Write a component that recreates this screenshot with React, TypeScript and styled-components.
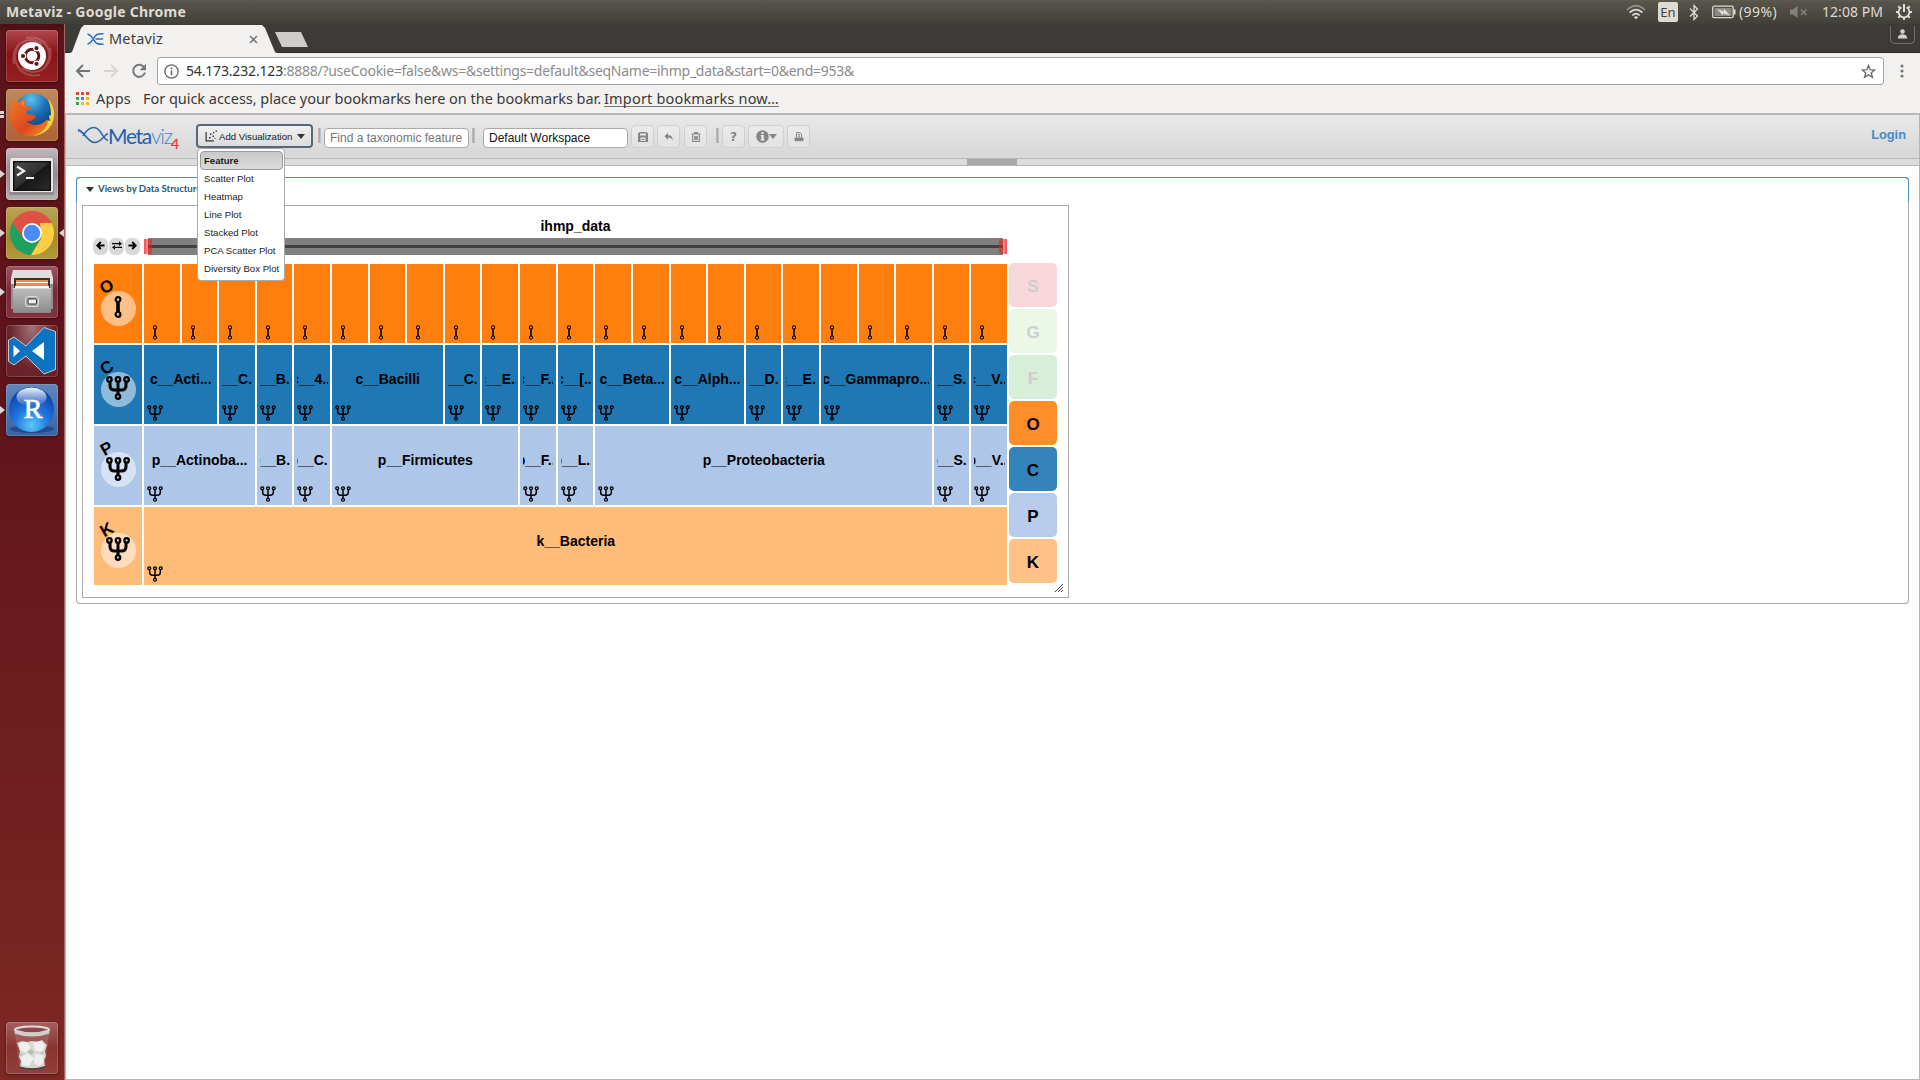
import React, { useLayoutEffect, useRef, useState } from "react";
import styled, { createGlobalStyle, css } from "styled-components";

const GlobalStyle = createGlobalStyle`
  * { box-sizing: border-box; }
  html, body { margin: 0; padding: 0; background: #fff; }
  body { width: 1920px; height: 1080px; overflow: hidden; font-family: "Liberation Sans", Arial, sans-serif; }
  svg { display: block; flex: none; }
`;

const uiFont = `"Noto Sans", "Open Sans", sans-serif`;

/* ---------- text that keeps a fixed measure ---------- */

const Measure = styled.span<{ $w: number }>`
  display: block;
  flex: none;
  width: ${(p) => p.$w}px;
  white-space: pre;
`;

function FittedText({ width, children, className }: { width: number; children: string; className?: string }) {
  const ref = useRef<HTMLSpanElement>(null);
  const [spacing, setSpacing] = useState(0);
  useLayoutEffect(() => {
    if (!ref.current) return;
    const natural = ref.current.getBoundingClientRect().width - spacing * children.length;
    setSpacing((width - natural) / children.length);
  }, [width, children]);
  return (
    <Measure $w={width} className={className}>
      <span ref={ref} style={{ letterSpacing: spacing }}>{children}</span>
    </Measure>
  );
}

/* ---------- desktop ---------- */

const Desktop = styled.div`
  width: 1920px;
  height: 1080px;
  display: flex;
  flex-direction: column;
`;

const SystemBar = styled.header`
  height: 24px;
  flex: none;
  display: flex;
  align-items: center;
  justify-content: space-between;
  padding: 0 8px 0 6px;
  background: linear-gradient(#5e5b50 0, #57544c 8%, #403f3a 100%);
  color: #dfdbd2;
  font-family: ${uiFont};
`;

const WindowTitle = styled(FittedText)`
  font-size: 14px;
  font-weight: 700;
  line-height: 24px;
`;

const Indicators = styled.div`
  display: flex;
  align-items: center;
  height: 24px;
`;

const IndicatorText = styled(FittedText)`
  font-size: 14px;
  line-height: 24px;
`;

const Lang = styled.div`
  width: 20px;
  height: 20px;
  margin: 0 11px 0 12px;
  border-radius: 2px;
  background: #dfdbd2;
  color: #45433e;
  font-size: 13px;
  line-height: 21px;
  text-align: center;
`;

const Gap = styled.span<{ $w: number }>`
  width: ${(p) => p.$w}px;
  flex: none;
`;

const Body = styled.div`
  flex: 1;
  display: flex;
  min-height: 0;
`;

const Launcher = styled.nav`
  width: 65px;
  flex: none;
  display: flex;
  flex-direction: column;
  gap: 7px;
  padding: 6px 0 6px 6px;
  background: linear-gradient(#4a0f13 0, #5d131a 8px, #5f141a 35%, #7e2823 100%);
  border-right: 1px solid #a6696a;
  position: relative;
`;

const Tile = styled.div<{ $bg: string; $last?: boolean }>`
  width: 52px;
  height: 52px;
  flex: none;
  border-radius: 4px;
  background: ${(p) => p.$bg};
  box-shadow: inset 0 0 0 1px rgba(255, 255, 255, 0.16), 0 1px 3px rgba(0, 0, 0, 0.4);
  position: relative;
  ${(p) => p.$last && css`margin-top: auto;`}
`;

const Pip = styled.i<{ $y: number; $right?: boolean }>`
  position: absolute;
  top: ${(p) => p.$y}px;
  ${(p) => (p.$right ? "right: -6px;" : "left: -6px;")}
  width: 0;
  height: 0;
  border: 4px solid transparent;
  ${(p) => (p.$right ? "border-right: 5px solid #d9d3d3; border-left: 0;" : "border-left: 5px solid #d9d3d3; border-right: 0;")}
`;

const PipBars = styled.i`
  position: absolute;
  left: -6px;
  top: 22px;
  width: 4px;
  height: 7px;
  background: linear-gradient(#d9d3d3 0 3px, transparent 3px 4px, #d9d3d3 4px);
`;

/* ---------- browser ---------- */

const Browser = styled.main`
  flex: 1;
  min-width: 0;
  display: flex;
  flex-direction: column;
`;

const TabStrip = styled.div`
  height: 29px;
  flex: none;
  display: flex;
  justify-content: space-between;
  background: #3c3b37;
  border-bottom: 1px solid #2b2a27;
  padding: 0 5px 0 5px;
`;

const TabGroup = styled.div`
  display: flex;
  height: 29px;
  gap: 0;
`;

const Tab = styled.div`
  width: 207px;
  height: 28px;
  margin-top: 1px;
  display: flex;
  align-items: center;
  padding: 0 18px 0 17px;
  background: #f2f1f0;
  clip-path: polygon(0 100%, 2px 27px, 11px 3px, 14px 0, 192px 0, 195px 3px, 205px 27px, 207px 100%);
`;

const TabTitle = styled(FittedText)`
  font: 14.5px/28px ${uiFont};
  color: #3c3c3c;
  margin: -2px 0 0 5px;
`;

const NewTab = styled.div`
  width: 33px;
  height: 15px;
  margin: 8px 0 0 -2px;
  background: #cecdcb;
  clip-path: polygon(0 0, 26px 0, 33px 100%, 7px 100%);
`;

const UserButton = styled.div`
  width: 25px;
  height: 18px;
  margin-top: 2px;
  border: 1px solid #73726d;
  border-top: 0;
  border-radius: 0 0 5px 5px;
  display: flex;
  justify-content: center;
  padding-top: 3px;
`;

const NavBar = styled.div`
  height: 36px;
  flex: none;
  display: flex;
  align-items: center;
  padding: 0 0 0 10px;
  background: #f2f1f0;
`;

const Omnibox = styled.div`
  width: 1727px;
  height: 28px;
  margin-left: 10px;
  display: flex;
  align-items: center;
  padding: 0 7px 0 6px;
  border: 1px solid #a5a4a2;
  border-radius: 3px;
  background: #fff;
  font: 14px/26px ${uiFont};
  color: #8c8c8c;
`;

const Host = styled(FittedText)`
  color: #333;
  margin-left: 7px;
`;

const Bookmarks = styled.div`
  height: 26px;
  flex: none;
  display: flex;
  align-items: flex-start;
  padding-left: 11px;
  background: #f2f1f0;
  border-bottom: 2px solid #b9b8b7;
  font: 14.5px/19px ${uiFont};
  color: #3a3a3a;
`;

const AppsGrid = styled.div`
  display: grid;
  grid-template-columns: repeat(3, 3px);
  grid-auto-rows: 3px;
  gap: 2px;
  margin: 3px 7px 0 0;
`;

const Dot = styled.i<{ $c: string }>`
  background: ${(p) => p.$c};
`;

const ImportLink = styled(FittedText)`
  margin-left: 3px;
  height: 18px;
  border-bottom: 1px solid #777;
`;

/* ---------- Metaviz page ---------- */

const Page = styled.div`
  flex: 1;
  min-height: 0;
  border: 1px solid #b5b5b5;
  border-top: 0;
  background: #fff;
`;

const Toolbar = styled.div`
  height: 44px;
  display: flex;
  align-items: flex-start;
  padding: 10px 12px 0 11px;
  background: linear-gradient(#e9e9e9, #d9d9d9 85%);
  border-bottom: 1px solid #b8b8b8;
`;

const Splitter = styled.div`
  height: 7px;
  background: #dcdcdc;
  border-bottom: 1px solid #b8b8b8;
  display: flex;
  padding-left: 901px;
`;

const SplitHandle = styled.div`
  width: 50px;
  height: 6px;
  background: #a9a9a9;
`;

const Logo = styled.div`
  width: 103px;
  height: 26px;
  margin-right: 16px;
  display: flex;
  color: #2a64b0;
`;

const LogoWord = styled(FittedText)<{ $light?: boolean }>`
  font: ${(p) => (p.$light ? 300 : 400)} 21px/21px Lato, sans-serif;
  color: ${(p) => (p.$light ? "#3f86cf" : "#2860b0")};
`;

const LogoFour = styled.span`
  font: 400 14px/14px Lato, sans-serif;
  -webkit-text-stroke: 0.3px #e03a3e;
  color: #e03a3e;
  margin: 12px 0 0 -1px;
`;

const AddWrap = styled.div`
  position: relative;
`;

const AddButton = styled.button`
  width: 117px;
  height: 24px;
  margin-top: -1px;
  display: flex;
  align-items: center;
  padding: 0 0 0 7px;
  border: 2px solid #56697a;
  border-radius: 4px;
  background: linear-gradient(#f1f1f1, #dcdcdc);
  font: 9.6px "Liberation Sans", Arial, sans-serif;
  color: #222;
  white-space: nowrap;
`;

const AddLabel = styled.span`
  margin: 0 5px 0 2px;
`;

const Menu = styled.ul`
  position: absolute;
  z-index: 5;
  left: 1px;
  top: 23px;
  width: 88px;
  height: 133px;
  margin: 0;
  padding: 2px;
  list-style: none;
  background: #fff;
  border: 1px solid #aaa;
  border-radius: 4px;
`;

const MenuItem = styled.li<{ $active?: boolean }>`
  height: 18px;
  padding-left: 4px;
  font-size: 9.6px;
  line-height: 18px;
  color: #222;
  white-space: nowrap;
  ${(p) =>
    p.$active &&
    css`
      height: 19px;
      width: 83px;
      margin-bottom: 0;
      padding-left: 3px;
      font-weight: 700;
      background: linear-gradient(#c9c9c9, #dadada);
      border: 1px solid #999;
      border-radius: 4px;
    `}
`;

const Bar = styled.i<{ $l: number; $r: number }>`
  width: 3px;
  height: 15px;
  flex: none;
  margin: 3px ${(p) => p.$r}px 0 ${(p) => p.$l}px;
  background: linear-gradient(90deg, #c8b6ae 0 1px, #a9a9a9 1px 2px, #b4c6d2 2px);
`;

const Field = styled.div<{ $w: number; $hint?: boolean }>`
  width: ${(p) => p.$w}px;
  height: 20px;
  flex: none;
  margin-top: 3px;
  padding-left: 5px;
  border: 1px solid #aaa;
  border-radius: 4px;
  background: #fff;
  font-size: 12px;
  line-height: 18px;
  color: ${(p) => (p.$hint ? "#757575" : "#111")};
  white-space: nowrap;
`;

const ToolButton = styled.div<{ $w?: number; $l: number }>`
  width: ${(p) => p.$w ?? 23}px;
  height: 23px;
  flex: none;
  margin-left: ${(p) => p.$l}px;
  display: flex;
  align-items: center;
  justify-content: center;
  border: 1px solid #d0d0d0;
  border-radius: 4px;
  background: linear-gradient(#ebebeb, #e2e2e2);
  color: #858585;
  font: 700 12px "DejaVu Sans", sans-serif;
`;

const Login = styled.a`
  margin: 2px 1px 0 auto;
  font-size: 12.8px;
  line-height: 15px;
  font-weight: 700;
  color: #428bca;
`;

const Section = styled.section`
  width: 1833px;
  height: 427px;
  margin: 11px 0 0 10px;
  border: 1px solid #aaa;
  border-top-color: #4c8fbd;
  border-radius: 4px;
  position: relative;
  padding: 0 5px;
  &::before {
    content: "";
    position: absolute;
    left: -1px;
    right: -1px;
    top: -1px;
    height: 24px;
    border: 1px solid #4c92c0;
    border-bottom: 0;
    border-radius: 4px 4px 0 0;
  }
`;

const SectionHead = styled.div`
  height: 27px;
  display: flex;
  align-items: flex-start;
  padding: 3px 0 0 4px;
  font: 700 9.6px/15px Lato, sans-serif;
  color: #1c5a78;
`;

const Caret = styled.i<{ $c?: string }>`
  width: 0;
  height: 0;
  border: 4px solid transparent;
  border-top: 5px solid ${(p) => p.$c ?? "#333"};
  border-bottom: 0;
`;

const HeadCaret = styled(Caret)`
  margin: 6px 4px 0 0;
`;

const Panel = styled.div`
  width: 987px;
  height: 393px;
  border: 1px solid #aaa;
  display: flex;
  padding: 11px 0 0 11px;
`;

const Main = styled.div`
  width: 913px;
`;

const ChartTitle = styled.h1`
  margin: 0 0 0 50px;
  width: 863px;
  height: 21px;
  text-align: center;
  font-size: 14px;
  line-height: 18px;
  font-weight: 700;
  color: #000;
`;

const SliderRow = styled.div`
  display: flex;
  gap: 1px;
  height: 26px;
  margin-left: -1px;
`;

const NavButton = styled.div`
  width: 15px;
  height: 17px;
  border-radius: 6px;
  background: #d8d8d8;
  display: flex;
  align-items: center;
  justify-content: center;
  padding-bottom: 3px;
`;

const Track = styled.div`
  width: 863px;
  height: 17px;
  margin-left: 3px;
  display: flex;
  align-items: center;
  justify-content: space-between;
  background: linear-gradient(#808080 0 7px, #404040 7px 10px, #808080 10px) 4px 0 / 855px 17px no-repeat;
`;

const Grip = styled.i<{ $flip?: boolean }>`
  width: 8px;
  height: 15px;
  transform: ${(p) => (p.$flip ? "scaleX(-1)" : "none")};
  background: linear-gradient(90deg, #f45c5c 0 2px, #ff8080 2px 4px, rgba(255, 20, 20, 0.55) 4px);
`;

const Levels = styled.div`
  display: flex;
  flex-direction: column;
  gap: 2px;
`;

const Level = styled.div<{ $bg: string; $h: number }>`
  height: ${(p) => p.$h}px;
  display: grid;
  grid-template-columns: 48px repeat(23, minmax(0, 1fr));
  column-gap: 2px;
  & > * {
    background: ${(p) => p.$bg};
  }
`;

const LevelHead = styled.div`
  position: relative;
  display: flex;
  align-items: center;
  justify-content: center;
  padding: 9px 0 0 0;
`;

const LevelLetter = styled.b`
  position: absolute;
  left: 4px;
  top: 13px;
  width: 18px;
  text-align: center;
  font-size: 17px;
  line-height: 20px;
  transform: rotate(-30deg);
`;

const Halo = styled.div`
  width: 35px;
  height: 35px;
  border-radius: 50%;
  background: rgba(255, 255, 255, 0.5);
  display: flex;
  align-items: center;
  justify-content: center;
  padding-bottom: 2px;
`;

const Cell = styled.div<{ $span: number }>`
  grid-column: span ${(p) => p.$span};
  min-width: 0;
  display: flex;
  flex-direction: column;
  justify-content: space-between;
  padding: 26px 2.5px 3px 3px;
`;

const CellLabel = styled.div`
  height: 18px;
  overflow: hidden;
  display: flex;
  justify-content: center;
  font-size: 14px;
  line-height: 17px;
  font-weight: 700;
  color: #000;
  white-space: nowrap;
`;

const Legend = styled.div`
  display: flex;
  flex-direction: column;
  gap: 2.1px;
  padding: 45.500px 0 0 2px;
`;

const LegendKey = styled.div<{ $bg: string; $off?: boolean }>`
  width: 48px;
  height: 44px;
  border-radius: 5px;
  background: ${(p) => p.$bg};
  color: ${(p) => (p.$off ? "#cfcdcf" : "#000")};
  font-size: 17px;
  font-weight: 700;
  line-height: 47px;
  text-align: center;
`;

const Corner = styled.div`
  align-self: flex-end;
  margin: 0 0 5px -2px;
`;

/* ---------- drawings ---------- */

const Fork = ({ size, bold }: { size: number; bold?: boolean }) => (
  <svg width={size} height={size} viewBox="0 0 24 24" fill="none" stroke="#000" strokeWidth={bold ? 2.3 : 1.9}>
    {[3.4, 12, 20.6].map((x) => <circle key={x} cx={x} cy="3.4" r="2.2" />)}
    <circle cx="12" cy="20.6" r="2.2" />
    <path strokeWidth={bold ? 3 : 2.2} d="M12 6v12M4 6v3.500q0 4.500 4.500 4.500h7q4.500 0 4.500-4.500V6" />
  </svg>
);

const Stem = ({ w, h, bold }: { w: number; h: number; bold?: boolean }) => (
  <svg width={w} height={h} viewBox="0 0 8 22" fill="none" stroke="#000" strokeWidth={bold ? 2.2 : 1.5}>
    <circle cx="4" cy="3.6" r="2.4" />
    <circle cx="4" cy="18.4" r="2.4" />
    <path strokeWidth={bold ? 3.6 : 2.3} d="M4 6v10" />
  </svg>
);

const UbuntuIcon = () => (
  <svg width="52" height="52" viewBox="0 0 52 52">
    <g fill="none" stroke="#fff" strokeOpacity=".2" strokeWidth="2">
      <path d="M8 34C4 14 22 4 36 14M20 8c20-4 30 16 18 30M44 18c4 20-14 30-28 20M34 45C14 48 4 32 12 16" />
    </g>
    <circle cx="26" cy="26" r="14" fill="#fff" />
    <circle cx="26" cy="26" r="6.800" fill="none" stroke="#6d1217" strokeWidth="3" />
    <g fill="#6d1217" stroke="#fff" strokeWidth="1.200">
      <circle cx="17" cy="26" r="2.700" /><circle cx="30.500" cy="18.200" r="2.700" /><circle cx="30.500" cy="33.800" r="2.700" />
    </g>
  </svg>
);

const FirefoxIcon = () => (
  <svg width="52" height="52" viewBox="0 0 52 52">
    <defs>
      <radialGradient id="ffb" cx=".45" cy=".15" r=".8"><stop offset="0" stopColor="#5cc4ee" /><stop offset=".5" stopColor="#1c6eb5" /><stop offset="1" stopColor="#123a72" /></radialGradient>
      <linearGradient id="ffo" x1="0" y1="0" x2="1" y2="1"><stop offset="0" stopColor="#ee7a28" /><stop offset=".6" stopColor="#e0471e" /><stop offset="1" stopColor="#f39a26" /></linearGradient>
    </defs>
    <circle cx="27" cy="24" r="19.500" fill="url(#ffb)" />
    <path fill="#fbd23a" d="M42 10c5 5 8 14 5 22-3 9-11 14-20 15 9-4 14-10 14-16l3 1-1-5 2-1c0-6-1-11-3-16z" />
    <path fill="url(#ffo)" d="M8 10c1 2 3 3 5 3 2-2 5-3 7-3-2 2-2 4-1 6l6 2c0 3-5 3-5 5 0 3 4 2 7 3 3 0 3 2 2 3-2 2-5 4-9 3 5 5 13 5 18 1 2-1 3-3 4-2 0 9-9 16-18 16C11 47 4 37 4 26c0-7 2-12 4-16z" />
    <path fill="#f7a23c" d="M19 12c-2 1-2 3-1 5l4 1c-3 0-5-1-6-3 0-2 1-3 3-3z" />
  </svg>
);

const TerminalIcon = () => (
  <svg width="52" height="52" viewBox="0 0 52 52">
    <defs><linearGradient id="tg" x1="0" y1="0" x2="1" y2="1"><stop offset="0" stopColor="#4c4c4c" /><stop offset=".5" stopColor="#2e2e2e" /><stop offset=".51" stopColor="#161616" /><stop offset="1" stopColor="#2a2a2a" /></linearGradient></defs>
    <rect x="3" y="10" width="45" height="37" rx="2" fill="#8b8b8b" />
    <rect x="4" y="10" width="43" height="34" rx="1.500" fill="#e8e8e8" />
    <rect x="7" y="13" width="38" height="30" fill="#111" />
    <rect x="8.500" y="14.500" width="35" height="27" fill="url(#tg)" />
    <path d="M11 18.500l7 4.500-7 4.500M20 30h8" fill="none" stroke="#eee" strokeWidth="2.200" />
  </svg>
);

const ChromeIcon = () => (
  <svg width="52" height="52" viewBox="0 0 52 52">
    <circle cx="26" cy="26" r="22" fill="#de5246" />
    <path fill="#1da15f" d="M6.500 15.800A22 22 0 0 0 25 48l10-17H17z" />
    <path fill="#ffce44" d="M45.600 16A22 22 0 0 1 25 48l10.500-17L34 16z" />
    <path fill="#de5246" d="M6.500 15.800A22 22 0 0 1 45.600 16H26l-9 14z" />
    <circle cx="26" cy="26" r="10" fill="#fff" /><circle cx="26" cy="26" r="8.200" fill="#4b8bf5" />
  </svg>
);

const FilesIcon = () => (
  <svg width="52" height="52" viewBox="0 0 52 52">
    <defs><linearGradient id="fg" x1="0" y1="0" x2="0" y2="1"><stop offset="0" stopColor="#bdbdbd" /><stop offset="1" stopColor="#8a8a8a" /></linearGradient></defs>
    <path fill="#8f8f8f" d="M5 11h42v32H5z" /><path fill="#dedede" d="M7 4h38l2 8v6H5v-6z" />
    <path fill="#3d302c" d="M8 12h36v12H8z" />
    <path fill="#ee8b4b" d="M10 14h32v9H10z" /><path fill="#fff" d="M10 16h32v1H10zM9 20h34v2H9z" />
    <path fill="url(#fg)" d="M7 22h38v25H7z" /><path stroke="#d4d4d4" d="M7 22.500h38" />
    <rect x="19.500" y="30.500" width="13" height="10" rx="2" fill="#aaa" stroke="#dcdcdc" />
    <rect x="22" y="33" width="8.500" height="5" rx="1" fill="#eee" stroke="#333" />
  </svg>
);

const CodeIcon = () => (
  <svg width="52" height="52" viewBox="0 0 52 52">
    <path d="M38 2.500l11.500 4v38L38 49 20 31 8 40l-5.500-3.500V15L8 12l12 9z" fill="#0b74c2" stroke="#d7c4c6" strokeWidth="1" />
    <path fill="#fff" d="M7.500 20v12L14 26zM38 17v18L26 26z" />
  </svg>
);

const RIcon = () => (
  <svg width="52" height="52" viewBox="0 0 52 52">
    <defs>
      <radialGradient id="rg" cx=".5" cy=".85" r=".8"><stop offset="0" stopColor="#59c8fa" /><stop offset=".5" stopColor="#1f72dd" /><stop offset="1" stopColor="#0c3fa8" /></radialGradient>
      <linearGradient id="rh" x1="0" y1="0" x2="0" y2="1"><stop offset="0" stopColor="#fff" stopOpacity=".95" /><stop offset="1" stopColor="#fff" stopOpacity="0" /></linearGradient>
    </defs>
    <ellipse cx="26" cy="45" rx="22" ry="4" fill="#1f3f78" opacity=".7" />
    <circle cx="25.500" cy="25.500" r="22.500" fill="url(#rg)" />
    <ellipse cx="25.500" cy="13" rx="15" ry="9.500" fill="url(#rh)" />
    <text x="27" y="34" textAnchor="middle" fontFamily="Liberation Serif, serif" fontSize="28" fill="#fff" stroke="#fff" strokeWidth=".7">R</text>
  </svg>
);

const TrashIcon = () => (
  <svg width="52" height="52" viewBox="0 0 52 52">
    <path fill="#fff" fillOpacity=".12" d="M9 12l4 32q13 5 26 0l4-32z" />
    <path fill="#d6d6d2" d="M11 21l5-2 5 1 5-1 5 1 5-2 5 5-2 6 1 5-2 4 1 6q-13 5-25 1l1-6-2-4 1-6z" />
    <path fill="#efefec" d="M13 21l7-1 5 5-5 6-6-3zM27 20l8-1 4 5-3 6-7-1zM15 35l7-4 6 5-5 8-7-1zM29 32l8 1 1 7-5 4-5-3z" />
    <path fill="#bdbdb8" d="M21 30l4-3 3 3-3 3zM13 31l4 1-2 2zM35 29l4 2-4 1z" />
    <path d="M13 45q13 4 26 0" fill="none" stroke="#444" strokeWidth="1.500" />
    <ellipse cx="26" cy="8" rx="17" ry="3.500" fill="#8a4a48" stroke="#dededb" strokeWidth="2.200" />
    <path d="M9 9.500q17 6 34 0" fill="none" stroke="#cfcfcc" strokeWidth="4" />
  </svg>
);

const Wifi = () => (
  <svg width="20" height="16" viewBox="0 0 20 16" fill="none" stroke="#dfdbd2" strokeWidth="1.700">
    <path opacity=".45" d="M.8 6Q10-2.500 19.200 6" /><path d="M3.500 8.700q6.500-6 13 0M6.300 11.500q3.700-3.600 7.400 0" /><circle cx="10" cy="14" r="1" fill="#dfdbd2" stroke="none" />
    <path d="M8.500 13.800q1.500-1.300 3 0" />
  </svg>
);

const Bluetooth = () => (
  <svg width="10" height="17" viewBox="0 0 10 17" fill="none" stroke="#dfdbd2" strokeWidth="1.300"><path d="M1 4.500l7.500 7.500L5 15.500v-14L8.500 5 1 12.500" /></svg>
);

const Battery = () => (
  <svg width="24" height="14" viewBox="0 0 24 14"><rect x=".7" y="1.200" width="20.500" height="11.500" rx="1.500" fill="none" stroke="#dfdbd2" strokeWidth="1.300" /><rect x="2.500" y="3" width="17" height="8" fill="#8d8a83" /><path fill="#dfdbd2" d="M21.500 4.500H23.500v5h-2zM5 4l7 2V3.500l6 7-7-2v2z" /></svg>
);

const Mute = () => (
  <svg width="18" height="14" viewBox="0 0 18 14"><path fill="#85827b" d="M0 4.500h3L7.500 1v12L3 9.500H0z" /><path d="M11 4.500l5.500 5.500M16.500 4.500L11 10" stroke="#85827b" strokeWidth="1.600" /></svg>
);

const Gear = () => (
  <svg width="16" height="16" viewBox="0 0 16 16" fill="none" stroke="#dfdbd2">
    <path strokeWidth="1.800" d="M5.500 3.200a5.400 5.400 0 1 0 5 0" /><path strokeWidth="2" d="M8 0v8" />
    <path strokeWidth="2" d="M0 8h2.500M13.500 8H16M2.300 2.300L4 4M12 4l1.700-1.700M2.300 13.700L4 12M12 12l1.700 1.700M8 13.500V16" />
  </svg>
);

const Favicon = () => (
  <svg width="17" height="14" viewBox="0 0 17 14" fill="none" stroke="#2b6fc0" strokeWidth="1.500">
    <path d="M.5 2C6 3.500 7 10.500 10 11.500S14 12.300 16.500 12.300M.5 12C6 10.500 7 3.500 10 2.500S14 1.700 16.500 1.700M8.500 7h7.500" />
  </svg>
);

const Arrow = ({ flip, color }: { flip?: boolean; color: string }) => (
  <svg width="16" height="14" viewBox="0 0 16 14" fill="none" stroke={color} strokeWidth="2">
    <path d={flip ? "M1 7h13M8 1l6 6-6 6" : "M15 7H2M8 1L2 7l6 6"} />
  </svg>
);

const Reload = () => (
  <svg width="16" height="16" viewBox="0 0 16 16"><path d="M13 4.200A6 6 0 1 0 14 9.500" fill="none" stroke="#7a7a7a" strokeWidth="2" /><path fill="#7a7a7a" d="M15 .8v6.500H8.500z" /></svg>
);

const Info = () => (
  <svg width="15" height="15" viewBox="0 0 15 15"><circle cx="7.500" cy="7.500" r="6.600" fill="none" stroke="#666" strokeWidth="1.300" /><path stroke="#666" strokeWidth="1.600" d="M7.500 6.500v4.700M7.500 3.500v1.700" /></svg>
);

const ScatterIcon = () => (
  <svg width="12" height="12" viewBox="0 0 12 12" fill="#333"><path d="M.5 2H1.700v8.300h7.300v1.200H.5zM4 7h1.600v1.600H4zM5 3.500h1.500V5H5zM7.500 5.500H9V7H7.500zM8 2h1.300v1.300H8zM10.500.5H12v1.300h-1.500zM9.500 8h1v1h-1z" /></svg>
);

const Ribbon = () => (
  <svg width="31" height="22" viewBox="0 0 31 22" fill="none" stroke="#2a64b0" strokeWidth="1.500">
    <path d="M1 4.500C8 7 11 18 18 17.500 25 17 27 10 31 8.500" /><path d="M6 11C10 4 13 2.500 17 2.500c7 0 8 11 14 13" />
    <path strokeWidth=".8" d="M1 6c6 1 9 11 17 11.500" />
  </svg>
);

const SmallArrow = ({ flip }: { flip?: boolean }) => (
  <svg width="9" height="9" viewBox="0 0 9 9" fill="none" stroke="#000" strokeWidth="1.900"><path d={flip ? "M.5 4.500h7M4.200 1l3.500 3.500L4.200 8" : "M8.500 4.500h-7M4.800 1L1.300 4.500 4.800 8"} /></svg>
);

const Exchange = () => (
  <svg width="10" height="9" viewBox="0 0 10 9"><path d="M0 2.700h9M1 6.300h9" stroke="#000" strokeWidth="1.300" /><path d="M7 .3l3 2.400-3 2.400zM3 3.900L0 6.300l3 2.400z" /></svg>
);

/* ---------- content ---------- */

type Entry = [string, number];

const levels: { key: string; color: string; height: number; cells: Entry[] }[] = [
  { key: "O", color: "#ff7f0e", height: 79, cells: Array.from({ length: 23 }, () => ["", 1] as Entry) },
  {
    key: "C", color: "#1f77b4", height: 79,
    cells: [["c__Acti...", 2], ["c__C...", 1], ["c__B...", 1], ["c__4...", 1], ["c__Bacilli", 3], ["c__C...", 1], ["c__E...", 1], ["c__F...", 1], ["c__[...", 1], ["c__Beta...", 2], ["c__Alph...", 2], ["c__D...", 1], ["c__E...", 1], ["c__Gammapro...", 3], ["c__S...", 1], ["c__V...", 1]],
  },
  {
    key: "P", color: "#aec7e8", height: 78.5,
    cells: [["p__Actinoba...", 3], ["p__B...", 1], ["p__C...", 1], ["p__Firmicutes", 5], ["p__F...", 1], ["p__L...", 1], ["p__Proteobacteria", 9], ["p__S...", 1], ["p__V...", 1]],
  },
  { key: "K", color: "#ffbb78", height: 78.5, cells: [["k__Bacteria", 23]] },
];

const legend: [string, string, boolean][] = [
  ["S", "#f8d7da", true], ["G", "#ebf7e7", true], ["F", "#d7eed9", true],
  ["O", "#ff8e29", false], ["C", "#3583bb", false], ["P", "#b6ccea", false], ["K", "#ffc185", false],
];

const charts = ["Feature", "Scatter Plot", "Heatmap", "Line Plot", "Stacked Plot", "PCA Scatter Plot", "Diversity Box Plot"];
const appDots = ["#ea4335", "#ea4335", "#ea4335", "#34a853", "#4285f4", "#fbbc05", "#34a853", "#fbbc05", "#fbbc05"];

const StemSlot = styled.div`
  margin-left: 5px;
`;

export default function App() {
  return (
    <Desktop>
      <GlobalStyle />
      <SystemBar>
        <WindowTitle width={180}>Metaviz - Google Chrome</WindowTitle>
        <Indicators>
          <Wifi />
          <Lang>En</Lang>
          <Bluetooth />
          <Gap $w={13} />
          <Battery />
          <Gap $w={3} />
          <IndicatorText width={38}>(99%)</IndicatorText>
          <Gap $w={13} />
          <Mute />
          <Gap $w={14} />
          <IndicatorText width={61}>12:08 PM</IndicatorText>
          <Gap $w={13} />
          <Gear />
        </Indicators>
      </SystemBar>
      <Body>
        <Launcher>
          <Tile $bg="linear-gradient(#b0494e, #8a1418 45%, #96201f)"><UbuntuIcon /></Tile>
          <Tile $bg="linear-gradient(#c08a5c, #ad6233)"><FirefoxIcon /><PipBars /></Tile>
          <Tile $bg="linear-gradient(#c3b9bc, #98898d 50%, #b9b0b3)"><TerminalIcon /><Pip $y={22} /></Tile>
          <Tile $bg="linear-gradient(#b9a455, #a58a2c 60%, #b09a3e)"><ChromeIcon /><Pip $y={22} /><Pip $y={22} $right /></Tile>
          <Tile $bg="linear-gradient(#a05662, #7d2734 50%, #84323e)"><FilesIcon /><Pip $y={22} /></Tile>
          <Tile $bg="radial-gradient(ellipse at 50% 0, #a37478, #6a242b 60%, #6a1f27)"><CodeIcon /></Tile>
          <Tile $bg="linear-gradient(#5f86bd, #3565a4)"><RIcon /><Pip $y={22} /></Tile>
          <Tile $last $bg="linear-gradient(#a5605f, #8a3431 50%, #933e3a)"><TrashIcon /></Tile>
        </Launcher>
        <Browser>
          <TabStrip>
            <TabGroup>
              <Tab>
                <Favicon />
                <TabTitle width={54}>Metaviz</TabTitle>
                <Gap $w={86} />
                <svg width="9" height="9" viewBox="0 0 9 9"><path d="M1 1l7 7M8 1L1 8" stroke="#7d7d7d" strokeWidth="1.700" /></svg>
              </Tab>
              <NewTab />
            </TabGroup>
            <UserButton>
              <svg width="11" height="10" viewBox="0 0 11 10" fill="#d4d1ca"><circle cx="5.500" cy="2.500" r="2.300" /><path d="M.8 9.500c0-3 2-4.200 4.700-4.200s4.700 1.200 4.700 4.200z" /></svg>
            </UserButton>
          </TabStrip>
          <NavBar>
            <Arrow color="#737373" />
            <Gap $w={12} />
            <Arrow flip color="#d6d5d4" />
            <Gap $w={12} />
            <Reload />
            <Omnibox>
              <Info />
              <Host width={97}>54.173.232.123</Host>
              <FittedText width={571}>:8888/?useCookie=false&ws=&settings=default&seqName=ihmp_data&start=0&end=953&</FittedText>
              <Gap $w={1007} />
              <svg width="15" height="15" viewBox="0 0 15 15"><path fill="none" stroke="#6e6e6e" strokeWidth="1.400" d="M7.500 1.500l1.700 4.200 4.500.3-3.500 2.900 1.200 4.400-3.900-2.500-3.900 2.500 1.200-4.400L1.300 6l4.500-.3z" /></svg>
            </Omnibox>
            <Gap $w={16} />
            <svg width="4" height="14" viewBox="0 0 4 14" fill="#777"><circle cx="2" cy="2" r="1.600" /><circle cx="2" cy="7" r="1.600" /><circle cx="2" cy="12" r="1.600" /></svg>
          </NavBar>
          <Bookmarks>
            <AppsGrid>{appDots.map((c, i) => <Dot key={i} $c={c} />)}</AppsGrid>
            <FittedText width={35}>Apps</FittedText>
            <Gap $w={12} />
            <FittedText width={458}>For quick access, place your bookmarks here on the bookmarks bar.</FittedText>
            <ImportLink width={175}>Import bookmarks now…</ImportLink>
          </Bookmarks>
          <Page>
            <Toolbar>
              <Logo>
                <Ribbon />
                <LogoWord width={43}>Meta</LogoWord>
                <LogoWord width={21} $light>viz</LogoWord>
                <LogoFour>4</LogoFour>
              </Logo>
              <AddWrap>
                <AddButton><ScatterIcon /><AddLabel>Add Visualization</AddLabel><Caret /></AddButton>
                <Menu>{charts.map((c, i) => <MenuItem key={c} $active={i === 0}>{c}</MenuItem>)}</Menu>
              </AddWrap>
              <Bar $l={5} $r={3} />
              <Field $w={145} $hint>Find a taxonomic feature</Field>
              <Bar $l={3} $r={8} />
              <Field $w={145}>Default Workspace</Field>
              <ToolButton $l={3}>
                <svg width="10" height="10" viewBox="0 0 10 10"><path fill="#858585" fillRule="evenodd" d="M1.500 0h7L10 1.500V10H0V1.500zM2 1.500v2h6v-2zM2.500 5.500V9h5V5.500zM3.500 7h3v1h-3z" /></svg>
              </ToolButton>
              <ToolButton $l={3}>
                <svg width="10" height="10" viewBox="0 0 10 10"><path fill="#858585" d="M4 .8v2.400c3.500 0 4.800 1.500 4.500 5.500C8 6.300 6.700 5.500 4 5.500v2.300L.5 4.300z" /></svg>
              </ToolButton>
              <ToolButton $l={4}>
                <svg width="10" height="10" viewBox="0 0 10 10" fill="none" stroke="#858585" strokeWidth="1.100"><path d="M.5 2h9M3.500 1.800V.6h3v1.200M1.700 2.500v7h6.600v-7M3.800 4v4M5 4v4M6.200 4v4" /></svg>
              </ToolButton>
              <Bar $l={9} $r={0} />
              <ToolButton $l={3}>?</ToolButton>
              <ToolButton $l={3} $w={36}>
                <svg width="13" height="13" viewBox="0 0 13 13"><circle cx="6.500" cy="6.500" r="6.300" fill="#858585" /><path fill="#eee" d="M5.400 2.200h2.300v1.900H5.400zM4.700 5h3v4.200h.8v1.300H4.600V9.200h.8V6.300h-.7z" /></svg>
                <Caret $c="#858585" />
              </ToolButton>
              <ToolButton $l={3}>
                <svg width="10" height="10" viewBox="0 0 10 10" fill="none" stroke="#858585" strokeWidth="1"><path d="M2.500 5.500V.7H6L7.500 2v3.500M4 2.700h2M4 4.200h2" /><path fill="#858585" d="M1 6h8v2.700H1z" /></svg>
              </ToolButton>
              <Login>Login</Login>
            </Toolbar>
            <Splitter><SplitHandle /></Splitter>
            <Section>
              <SectionHead><HeadCaret />Views by Data Structures</SectionHead>
              <Panel>
                <Main>
                  <ChartTitle>ihmp_data</ChartTitle>
                  <SliderRow>
                    <NavButton><SmallArrow /></NavButton>
                    <NavButton><Exchange /></NavButton>
                    <NavButton><SmallArrow flip /></NavButton>
                    <Track><Grip /><Grip $flip /></Track>
                  </SliderRow>
                  <Levels>
                    {levels.map((l) => (
                      <Level key={l.key} $bg={l.color} $h={l.height}>
                        <LevelHead>
                          <LevelLetter>{l.key}</LevelLetter>
                          <Halo>{l.key === "O" ? <Stem w={8} h={22} bold /> : <Fork size={24} bold />}</Halo>
                        </LevelHead>
                        {l.cells.map(([name, span], i) => (
                          <Cell key={i} $span={span}>
                            <CellLabel>{name}</CellLabel>
                            {l.key === "O" ? <StemSlot><Stem w={6} h={15} /></StemSlot> : <Fork size={16} />}
                          </Cell>
                        ))}
                      </Level>
                    ))}
                  </Levels>
                </Main>
                <Legend>
                  {legend.map(([k, c, off]) => <LegendKey key={k} $bg={c} $off={off}>{k}</LegendKey>)}
                </Legend>
                <Corner>
                  <svg width="8" height="8" viewBox="0 0 8 8" stroke="#444" strokeWidth="1"><path d="M0 8L8 0M3 8l5-5M6 8l2-2" /></svg>
                </Corner>
              </Panel>
            </Section>
          </Page>
        </Browser>
      </Body>
    </Desktop>
  );
}
